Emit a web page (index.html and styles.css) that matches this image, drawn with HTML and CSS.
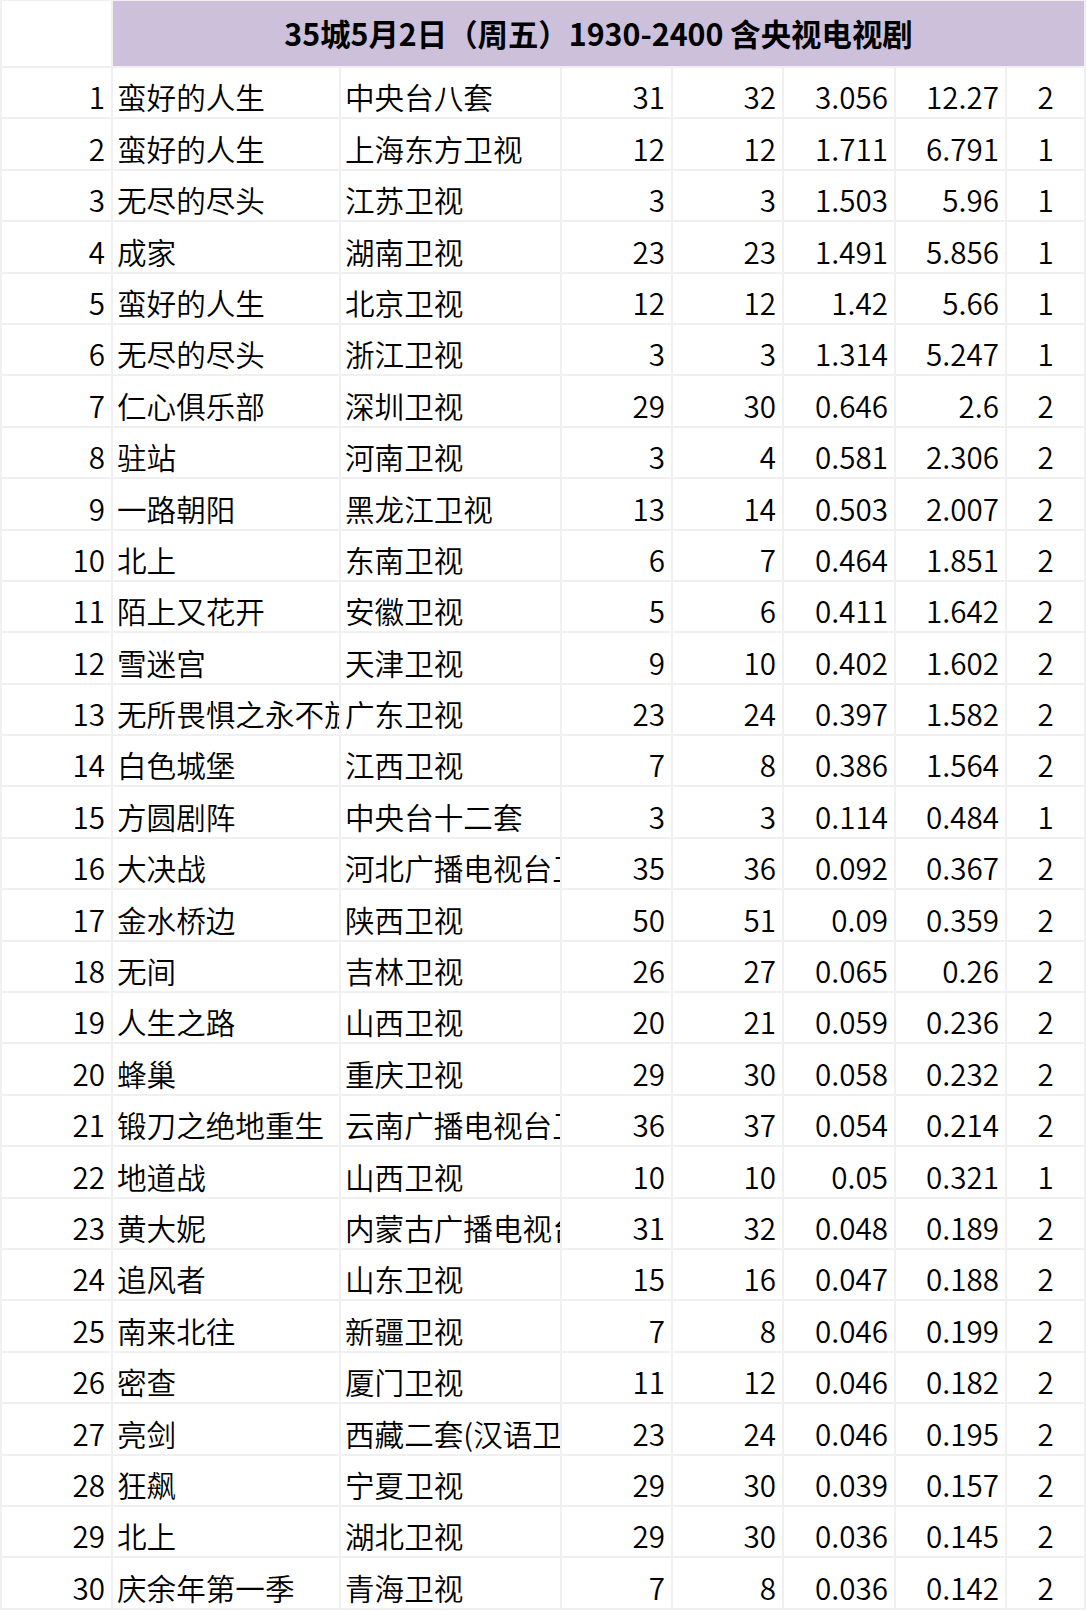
FILE: index.html
```html
<!DOCTYPE html>
<html lang="zh-CN">
<head>
<meta charset="utf-8">
<title>35城5月2日 收视</title>
<link rel="stylesheet" href="styles.css">
</head>
<body>
<div class="sheet">
  <div class="cell blank"></div>
  <div class="cell title">35城5月2日（周五）1930-2400 含央视电视剧</div>

  <div class="cell num">1</div><div class="cell txt">蛮好的人生</div><div class="cell txt">中央台八套</div><div class="cell num">31</div><div class="cell num">32</div><div class="cell num">3.056</div><div class="cell num">12.27</div><div class="cell mid">2</div>
  <div class="cell num">2</div><div class="cell txt">蛮好的人生</div><div class="cell txt">上海东方卫视</div><div class="cell num">12</div><div class="cell num">12</div><div class="cell num">1.711</div><div class="cell num">6.791</div><div class="cell mid">1</div>
  <div class="cell num">3</div><div class="cell txt">无尽的尽头</div><div class="cell txt">江苏卫视</div><div class="cell num">3</div><div class="cell num">3</div><div class="cell num">1.503</div><div class="cell num">5.96</div><div class="cell mid">1</div>
  <div class="cell num">4</div><div class="cell txt">成家</div><div class="cell txt">湖南卫视</div><div class="cell num">23</div><div class="cell num">23</div><div class="cell num">1.491</div><div class="cell num">5.856</div><div class="cell mid">1</div>
  <div class="cell num">5</div><div class="cell txt">蛮好的人生</div><div class="cell txt">北京卫视</div><div class="cell num">12</div><div class="cell num">12</div><div class="cell num">1.42</div><div class="cell num">5.66</div><div class="cell mid">1</div>
  <div class="cell num">6</div><div class="cell txt">无尽的尽头</div><div class="cell txt">浙江卫视</div><div class="cell num">3</div><div class="cell num">3</div><div class="cell num">1.314</div><div class="cell num">5.247</div><div class="cell mid">1</div>
  <div class="cell num">7</div><div class="cell txt">仁心俱乐部</div><div class="cell txt">深圳卫视</div><div class="cell num">29</div><div class="cell num">30</div><div class="cell num">0.646</div><div class="cell num">2.6</div><div class="cell mid">2</div>
  <div class="cell num">8</div><div class="cell txt">驻站</div><div class="cell txt">河南卫视</div><div class="cell num">3</div><div class="cell num">4</div><div class="cell num">0.581</div><div class="cell num">2.306</div><div class="cell mid">2</div>
  <div class="cell num">9</div><div class="cell txt">一路朝阳</div><div class="cell txt">黑龙江卫视</div><div class="cell num">13</div><div class="cell num">14</div><div class="cell num">0.503</div><div class="cell num">2.007</div><div class="cell mid">2</div>
  <div class="cell num">10</div><div class="cell txt">北上</div><div class="cell txt">东南卫视</div><div class="cell num">6</div><div class="cell num">7</div><div class="cell num">0.464</div><div class="cell num">1.851</div><div class="cell mid">2</div>
  <div class="cell num">11</div><div class="cell txt">陌上又花开</div><div class="cell txt">安徽卫视</div><div class="cell num">5</div><div class="cell num">6</div><div class="cell num">0.411</div><div class="cell num">1.642</div><div class="cell mid">2</div>
  <div class="cell num">12</div><div class="cell txt">雪迷宫</div><div class="cell txt">天津卫视</div><div class="cell num">9</div><div class="cell num">10</div><div class="cell num">0.402</div><div class="cell num">1.602</div><div class="cell mid">2</div>
  <div class="cell num">13</div><div class="cell txt">无所畏惧之永不放弃</div><div class="cell txt">广东卫视</div><div class="cell num">23</div><div class="cell num">24</div><div class="cell num">0.397</div><div class="cell num">1.582</div><div class="cell mid">2</div>
  <div class="cell num">14</div><div class="cell txt">白色城堡</div><div class="cell txt">江西卫视</div><div class="cell num">7</div><div class="cell num">8</div><div class="cell num">0.386</div><div class="cell num">1.564</div><div class="cell mid">2</div>
  <div class="cell num">15</div><div class="cell txt">方圆剧阵</div><div class="cell txt">中央台十二套</div><div class="cell num">3</div><div class="cell num">3</div><div class="cell num">0.114</div><div class="cell num">0.484</div><div class="cell mid">1</div>
  <div class="cell num">16</div><div class="cell txt">大决战</div><div class="cell txt">河北广播电视台卫视</div><div class="cell num">35</div><div class="cell num">36</div><div class="cell num">0.092</div><div class="cell num">0.367</div><div class="cell mid">2</div>
  <div class="cell num">17</div><div class="cell txt">金水桥边</div><div class="cell txt">陕西卫视</div><div class="cell num">50</div><div class="cell num">51</div><div class="cell num">0.09</div><div class="cell num">0.359</div><div class="cell mid">2</div>
  <div class="cell num">18</div><div class="cell txt">无间</div><div class="cell txt">吉林卫视</div><div class="cell num">26</div><div class="cell num">27</div><div class="cell num">0.065</div><div class="cell num">0.26</div><div class="cell mid">2</div>
  <div class="cell num">19</div><div class="cell txt">人生之路</div><div class="cell txt">山西卫视</div><div class="cell num">20</div><div class="cell num">21</div><div class="cell num">0.059</div><div class="cell num">0.236</div><div class="cell mid">2</div>
  <div class="cell num">20</div><div class="cell txt">蜂巢</div><div class="cell txt">重庆卫视</div><div class="cell num">29</div><div class="cell num">30</div><div class="cell num">0.058</div><div class="cell num">0.232</div><div class="cell mid">2</div>
  <div class="cell num">21</div><div class="cell txt">锻刀之绝地重生</div><div class="cell txt">云南广播电视台卫视</div><div class="cell num">36</div><div class="cell num">37</div><div class="cell num">0.054</div><div class="cell num">0.214</div><div class="cell mid">2</div>
  <div class="cell num">22</div><div class="cell txt">地道战</div><div class="cell txt">山西卫视</div><div class="cell num">10</div><div class="cell num">10</div><div class="cell num">0.05</div><div class="cell num">0.321</div><div class="cell mid">1</div>
  <div class="cell num">23</div><div class="cell txt">黄大妮</div><div class="cell txt">内蒙古广播电视台</div><div class="cell num">31</div><div class="cell num">32</div><div class="cell num">0.048</div><div class="cell num">0.189</div><div class="cell mid">2</div>
  <div class="cell num">24</div><div class="cell txt">追风者</div><div class="cell txt">山东卫视</div><div class="cell num">15</div><div class="cell num">16</div><div class="cell num">0.047</div><div class="cell num">0.188</div><div class="cell mid">2</div>
  <div class="cell num">25</div><div class="cell txt">南来北往</div><div class="cell txt">新疆卫视</div><div class="cell num">7</div><div class="cell num">8</div><div class="cell num">0.046</div><div class="cell num">0.199</div><div class="cell mid">2</div>
  <div class="cell num">26</div><div class="cell txt">密查</div><div class="cell txt">厦门卫视</div><div class="cell num">11</div><div class="cell num">12</div><div class="cell num">0.046</div><div class="cell num">0.182</div><div class="cell mid">2</div>
  <div class="cell num">27</div><div class="cell txt">亮剑</div><div class="cell txt">西藏二套(汉语卫视)</div><div class="cell num">23</div><div class="cell num">24</div><div class="cell num">0.046</div><div class="cell num">0.195</div><div class="cell mid">2</div>
  <div class="cell num">28</div><div class="cell txt">狂飙</div><div class="cell txt">宁夏卫视</div><div class="cell num">29</div><div class="cell num">30</div><div class="cell num">0.039</div><div class="cell num">0.157</div><div class="cell mid">2</div>
  <div class="cell num">29</div><div class="cell txt">北上</div><div class="cell txt">湖北卫视</div><div class="cell num">29</div><div class="cell num">30</div><div class="cell num">0.036</div><div class="cell num">0.145</div><div class="cell mid">2</div>
  <div class="cell num">30</div><div class="cell txt">庆余年第一季</div><div class="cell txt">青海卫视</div><div class="cell num">7</div><div class="cell num">8</div><div class="cell num">0.036</div><div class="cell num">0.142</div><div class="cell mid">2</div>
</div>
</body>
</html>
```
FILE: styles.css
```css
html, body {
  margin: 0;
  padding: 0;
  background: #ffffff;
}

body {
  font-family: "Noto Sans CJK SC", "Open Sans", sans-serif;
  color: #000000;
}

.sheet {
  display: grid;
  grid-template-columns: 109px 226px 219px 109px 109px 110px 109px 77px;
  grid-template-rows: 65px;
  grid-auto-rows: 49.4px;
  gap: 2px;
  padding: 1px 2px 2px 2px;
  width: 1086px;
  box-sizing: border-box;
  background: #f0f0f0;
}

.cell {
  background: #ffffff;
  overflow: hidden;
  white-space: nowrap;
  font-size: 29.6px;
  font-weight: 350;
  line-height: 1;
  display: flex;
  align-items: center;
  padding-top: 9px;
  box-sizing: border-box;
}

.title {
  grid-column: 2 / 9;
  background: #ccc0da;
  justify-content: center;
  font-weight: 700;
  font-size: 30.4px;
  padding-top: 0;
}

.num {
  justify-content: flex-end;
  padding-right: 6px;
}

.txt {
  justify-content: flex-start;
  padding-left: 4px;
}

.mid {
  justify-content: center;
}
```
